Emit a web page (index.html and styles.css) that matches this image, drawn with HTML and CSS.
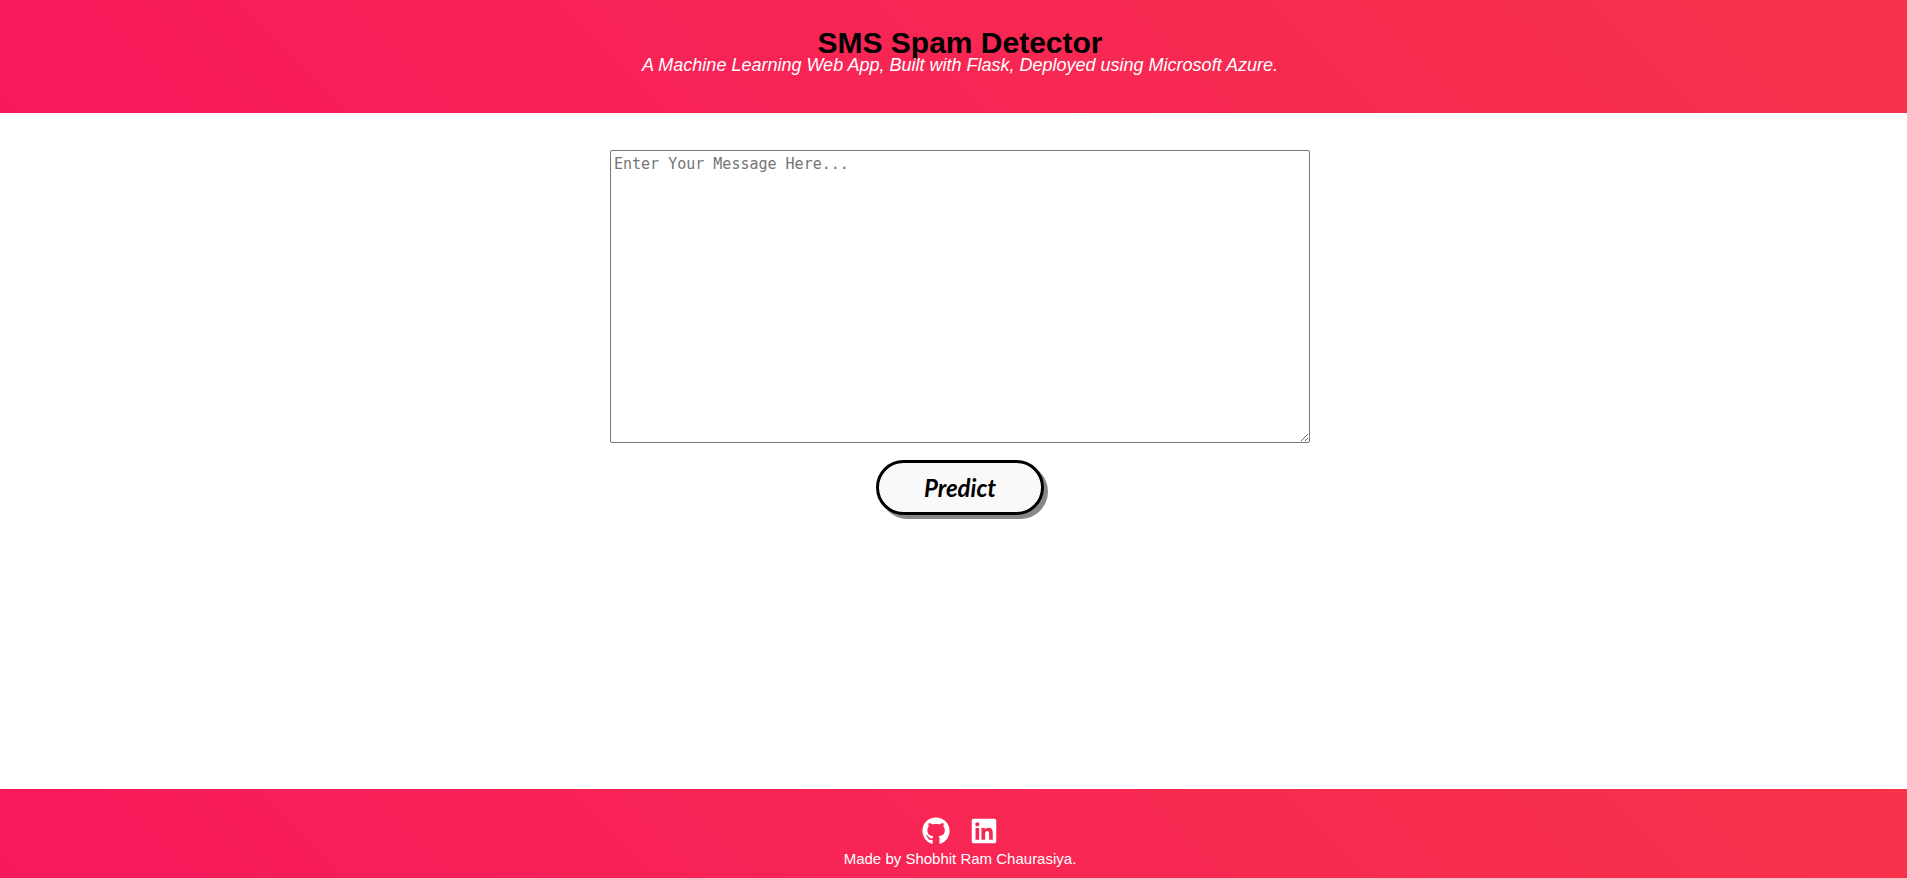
FILE: index.html
```html
<!DOCTYPE html>
<html lang="en">
<head>
<meta charset="utf-8">
<title>SMS Spam Detector</title>
<link rel="stylesheet" href="styles.css">
</head>
<body>
<header class="banner header">
  <h1 class="title">SMS Spam Detector</h1>
  <p class="subtitle">A Machine Learning Web App, Built with Flask, Deployed using Microsoft Azure.</p>
</header>
<main class="content">
  <form class="form">
    <textarea class="message" name="message" aria-label="Message" placeholder="Enter Your Message Here..."></textarea>
    <button class="predict" type="button">Predict</button>
  </form>
</main>
<footer class="banner footer">
  <nav class="social">
    <a href="#" aria-label="GitHub"><svg class="icon" viewBox="0 0 496 512"><path fill="currentColor" d="M165.900 397.400c0 2-2.300 3.600-5.200 3.600-3.300.3-5.600-1.300-5.600-3.600 0-2 2.300-3.600 5.200-3.600 3-.3 5.600 1.300 5.600 3.600zM244.800 8C106.100 8 0 113.300 0 252c0 110.900 69.800 205.800 169.500 239.200 12.800 2.300 17.300-5.600 17.300-12.100 0-6.200-.3-40.400-.3-61.400 0 0-70 15-84.700-29.800 0 0-11.400-29.100-27.800-36.600 0 0-22.900-15.700 1.600-15.400 0 0 24.900 2 38.600 25.800 21.900 38.600 58.600 27.500 72.900 20.900 2.300-16 8.800-27.100 16-33.700-55.900-6.200-112.300-14.300-112.300-110.500 0-27.500 7.600-41.300 23.600-58.900-2.600-6.500-11.100-33.300 2.600-67.900 20.900-6.500 69 27 69 27 20-5.600 41.500-8.500 62.800-8.500s42.800 2.900 62.800 8.500c0 0 48.100-33.600 69-27 13.700 34.700 5.200 61.400 2.600 67.900 16 17.700 25.800 31.500 25.800 58.900 0 96.500-58.900 104.200-114.800 110.500 9.200 7.900 17 22.900 17 46.400 0 33.700-.3 75.400-.3 83.600 0 6.500 4.600 14.400 17.300 12.100C428.200 457.800 496 362.900 496 252 496 113.300 383.500 8 244.800 8z"/></svg></a>
    <a href="#" aria-label="LinkedIn"><svg class="icon" viewBox="-24 0 496 512"><path fill="currentColor" d="M416 32H31.900C14.300 32 0 46.500 0 64.300v383.400C0 465.500 14.300 480 31.900 480H416c17.600 0 32-14.500 32-32.300V64.300c0-17.800-14.400-32.300-32-32.300zM135.400 416H69V202.200h66.500V416zm-33.200-243c-21.300 0-38.500-17.300-38.500-38.500S80.900 96 102.200 96c21.200 0 38.500 17.300 38.500 38.500 0 21.300-17.200 38.500-38.500 38.500zm282.100 243h-66.400V312c0-24.800-.5-56.700-34.500-56.700-34.600 0-39.900 27-39.900 54.900V416h-66.400V202.200h63.700v29.200h.9c8.900-16.800 30.600-34.500 62.900-34.500 67.200 0 79.700 44.300 79.700 101.900V416z"/></svg></a>
  </nav>
  <p class="credit">Made by Shobhit Ram Chaurasiya.</p>
</footer>
</body>
</html>
```
FILE: styles.css
```css
* {
  box-sizing: border-box;
}

body {
  display: flex;
  flex-direction: column;
  min-height: 100vh;
  margin: 0;
  background: #fff;
  font-family: "Liberation Sans", Arial, sans-serif;
}

.banner {
  padding-left: 13px;
  background: linear-gradient(45deg, #f8195d, #f6334a);
  color: #fff;
  text-align: center;
}

.header {
  padding-top: 29px;
  padding-bottom: 40px;
}

.title {
  margin: 0;
  color: #000;
  font-size: 30px;
  line-height: 28px;
}

.subtitle {
  margin: 0;
  font-size: 18px;
  font-style: italic;
  line-height: 16px;
}

.content {
  flex: 1;
  padding: 37px 0 0 13px;
}

.form {
  display: flex;
  flex-direction: column;
  align-items: center;
  gap: 17px;
}

.message {
  width: 700px;
  max-width: 100%;
  height: 293px;
  padding: 4px 3px;
  border: 1px solid #767676;
  border-radius: 2px;
  font-family: "DejaVu Sans Mono", monospace;
  font-size: 15px;
}

.message::placeholder {
  color: #757575;
}

.predict {
  padding: 9px 45px;
  border: 3px solid #000;
  border-radius: 28px;
  background: #f9f9f9;
  box-shadow: 4px 4px #888;
  color: #000;
  font-family: Lato, sans-serif;
  font-size: 24px;
  font-style: italic;
  font-weight: 700;
  line-height: 31px;
}

.footer {
  padding-top: 28px;
  padding-bottom: 10px;
}

.social {
  display: flex;
  justify-content: center;
  gap: 20px;
}

.social a {
  display: flex;
  color: #fff;
}

.icon {
  width: 28px;
  height: 28px;
}

.credit {
  margin: 0;
  padding-top: 4px;
  font-size: 15px;
  line-height: 19px;
}
```
